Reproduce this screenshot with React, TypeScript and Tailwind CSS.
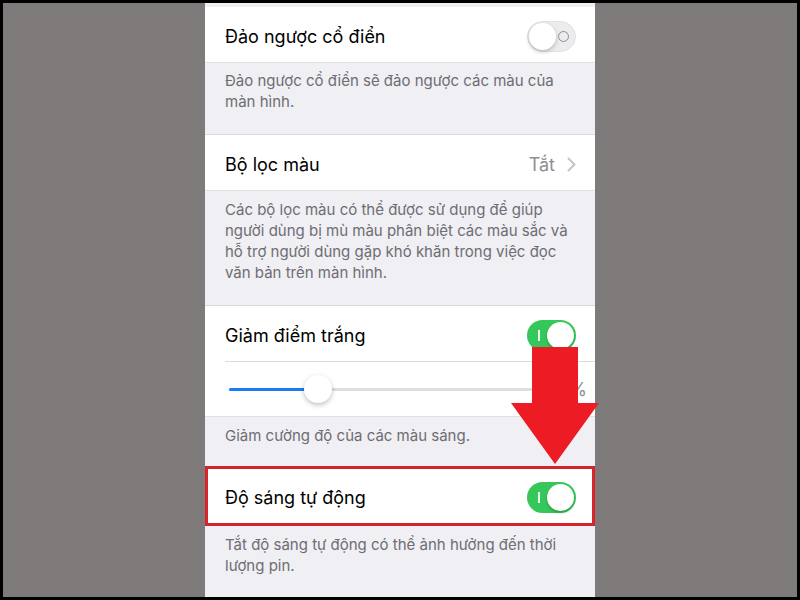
import type { ReactNode } from "react";

function Toggle({ on }: { on: boolean }) {
  if (on) {
    return (
      <div className="relative h-[31px] w-[49px] rounded-full bg-[#35c759]">
        <span className="absolute left-[11px] top-[10px] h-[11px] w-[2px] bg-white/90" />
        <span className="absolute right-[2px] top-[2px] h-[27px] w-[27px] rounded-full bg-white shadow-[0_2px_3px_rgba(0,0,0,0.2)]" />
      </div>
    );
  }
  return (
    <div className="relative h-[31px] w-[49px] rounded-full border border-[#e2e2e6] bg-[#ececef]">
      <span className="absolute right-[6px] top-[9px] h-[11px] w-[11px] rounded-full border border-[#8e8e93]" />
      <span className="absolute left-[1px] top-[1px] h-[27px] w-[27px] rounded-full bg-white shadow-[0_2px_4px_rgba(0,0,0,0.22)]" />
    </div>
  );
}

function Footer({ children, className }: { children: ReactNode; className: string }) {
  return (
    <div className={`px-5 text-[15px] leading-[21px] text-[#6d6d72] ${className}`}>{children}</div>
  );
}

function Row({ label, right }: { label: string; right: ReactNode }) {
  return (
    <div className="flex h-[55px] items-center justify-between bg-white pl-5 pr-[19px] pt-[3px]">
      <span className="text-[18px] text-black">{label}</span>
      {right}
    </div>
  );
}

export default function App() {
  return (
    <div
      className="h-[600px] w-[800px] bg-black p-[3px]"
      style={{ fontFamily: "Inter, 'Noto Sans', sans-serif" }}
    >
      <div className="relative flex h-full justify-center bg-[#7e7a79]">
        <div className="flex h-full w-[390px] flex-col overflow-hidden bg-[#f0eff4]">
          <div className="h-[4px]" />
          <Row label="Đảo ngược cổ điển" right={<Toggle on={false} />} />
          <Footer className="h-[72px] border-t border-[#e0e0e4] pt-[7px]">
            Đảo ngược cổ điển sẽ đảo ngược các màu của màn hình.
          </Footer>

          <div className="border-t border-[#d9d9dd]">
            <Row
              label="Bộ lọc màu"
              right={
                <div className="flex items-center gap-[12px]">
                  <span className="text-[18px] text-[#8e8e93]">Tắt</span>
                  <svg width="9" height="15" viewBox="0 0 9 15" fill="none">
                    <path d="M1.5 1.5 7.5 7.5 1.5 13.5" stroke="#c4c4c9" strokeWidth="2" strokeLinecap="round" strokeLinejoin="round" />
                  </svg>
                </div>
              }
            />
          </div>
          <Footer className="h-[115px] border-t border-[#e0e0e4] pt-[8px]">
            Các bộ lọc màu có thể được sử dụng để giúp người dùng bị mù màu phân biệt các màu sắc và hỗ trợ người dùng gặp khó khăn trong việc đọc văn bản trên màn hình.
          </Footer>

          <div className="border-t border-[#d9d9dd] bg-white">
            <Row label="Giảm điểm trắng" right={<Toggle on />} />
            <div className="ml-5 flex h-[55px] items-center border-t border-[#dcdcdf] pr-[8px]">
              <div className="relative ml-[4px] h-[3px] flex-1 rounded-full bg-[#dededf]">
                <div className="absolute left-0 top-0 h-[3px] w-[89px] rounded-full bg-[#1a7cf5]" />
                <span className="absolute left-[75px] top-[-13px] h-[28px] w-[28px] rounded-full bg-white shadow-[0_2px_5px_rgba(0,0,0,0.25)]" />
              </div>
              <span className="ml-[6px] text-[18px] text-[#8e8e93]">%</span>
            </div>
          </div>
          <Footer className="h-[50px] border-t border-[#e0e0e4] pt-[8px]">
            Giảm cường độ của các màu sáng.
          </Footer>

          <div className="border-[3px] border-[#d7232c] bg-white">
            <div className="flex h-[54px] items-center justify-between bg-white pl-[17px] pr-[16px] pt-[2px]">
              <span className="text-[18px] text-black">Độ sáng tự động</span>
              <Toggle on />
            </div>
          </div>
          <Footer className="flex-1 pt-[8px]">
            Tắt độ sáng tự động có thể ảnh hưởng đến thời lượng pin.
          </Footer>
        </div>

        {/* red arrow pointing down at the auto-brightness row */}
        <svg
          className="absolute left-[508px] top-[344px]"
          width="88"
          height="117"
          viewBox="0 0 88 117"
        >
          <polygon points="21,0 67,0 67,56 88,56 44,117 0,56 21,56" fill="#ed1c24" />
        </svg>
      </div>
    </div>
  );
}
